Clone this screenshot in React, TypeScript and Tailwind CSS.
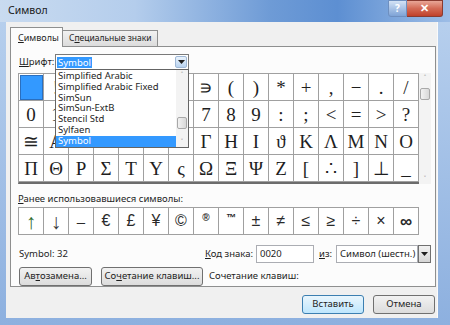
import React from 'react';

const gridRows: string[][] = [
  [' ', '!', '∀', '#', '∃', '%', '&', '∍', '(', ')', '*', '+', ',', '−', '.', '/'],
  ['0', '1', '2', '3', '4', '5', '6', '7', '8', '9', ':', ';', '<', '=', '>', '?'],
  ['≅', 'Α', 'Β', 'Χ', 'Δ', 'Ε', 'Φ', 'Γ', 'Η', 'Ι', 'ϑ', 'Κ', 'Λ', 'Μ', 'Ν', 'Ο'],
  ['Π', 'Θ', 'Ρ', 'Σ', 'Τ', 'Υ', 'ς', 'Ω', 'Ξ', 'Ψ', 'Ζ', '[', '∴', ']', '⊥', '_'],
];

const recent = ['↑', '↓', '–', '€', '£', '¥', '©', '®', '™', '±', '≠', '≤', '≥', '÷', '×', '∞'];

const fonts = ['Simplified Arabic', 'Simplified Arabic Fixed', 'SimSun', 'SimSun-ExtB', 'Stencil Std', 'Sylfaen', 'Symbol'];

function DownArrow() {
  return (
    <svg width="7" height="4" viewBox="0 0 7 4">
      <path d="M0 0h7L3.5 4z" fill="#1e1e1e" />
    </svg>
  );
}

function Scrollbar({ small }: { small?: boolean }) {
  return (
    <div className="w-[12px] flex flex-col justify-between items-center bg-[#f3f3f3] py-[1px]">
      <div className="w-[10px] flex flex-col items-center">
        <span className="text-[7px] leading-[8px] text-[#606060]">˄</span>
        {!small && <div className="w-[10px] h-[12px] mt-[6px] border border-[#a8a8a8] rounded-[2px] bg-gradient-to-r from-[#f2f2f2] to-[#d8d8d8]" />}
      </div>
      {small && <div className="w-[10px] h-[12px] border border-[#a8a8a8] rounded-[2px] bg-gradient-to-r from-[#f2f2f2] to-[#d8d8d8] mt-[28px]" />}
      <span className="text-[7px] leading-[8px] text-[#606060]">˅</span>
    </div>
  );
}

function Btn({ children, w, focused }: { children: React.ReactNode; w: string; focused?: boolean }) {
  return (
    <div
      className={`${w} h-[19px] flex items-center justify-center rounded-[3px] border text-[9.5px] text-[#1e1e1e] ${
        focused
          ? 'border-[#3c7fb1] bg-gradient-to-b from-[#eaf6fd] to-[#bee6fd]'
          : 'border-[#707070] bg-gradient-to-b from-[#f2f2f2] to-[#dcdcdc]'
      }`}
    >
      {children}
    </div>
  );
}

function recentClass(c: string, i: number) {
  if (i === 0) return 'text-[21px] text-[#2d6a2d] font-light';
  if (i === 1) return 'text-[21px] text-[#3a3a3a] font-light';
  if (c === '®' || c === '™') return 'text-[10px] font-bold text-[#2a2a2a] pb-[6px]';
  if (c === '∞') return 'text-[17px] font-bold text-[#2a2a2a]';
  if (c === '–') return 'text-[15px] text-[#2a2a2a]';
  return 'text-[16px] text-[#2a2a2a]';
}

export default function App() {
  return (
    <div className="w-[450px] h-[325px] flex flex-col overflow-hidden bg-gradient-to-b from-[#b9d1ee] to-[#8db0df] font-['Noto_Sans','Open_Sans',sans-serif] text-[#1e1e1e]">
      {/* title bar */}
      <div className="h-[22px] flex items-start justify-between bg-[linear-gradient(90deg,#c9dbf0_0%,#b4cdec_30%,#6e9bd6_60%,#5d8fd2_75%,#9dbde6_100%)]">
        <span className="pl-[8px] pt-[3px] text-[10.5px] text-[#1a1a1a]">Символ</span>
        <div className="flex pr-[7px]">
          <div className="w-[19px] h-[17px] flex items-center justify-center rounded-bl-[3px] border border-[#6e8fbf] bg-gradient-to-b from-[#d3e2f5] to-[#7ea3d6] text-[10px] font-bold text-white">?</div>
          <div className="w-[36px] h-[17px] flex items-center justify-center rounded-br-[3px] border border-l-0 border-[#8a3b30] bg-gradient-to-b from-[#e8a697] via-[#d36a55] to-[#c0402a] text-[11px] font-bold text-white">✕</div>
        </div>
      </div>

      {/* client */}
      <div className="flex-1 flex pl-[6px] pr-[12px] pb-[7px]">
        <div className="flex-1 bg-[#f0f0f0] flex flex-col pl-[4px] pr-[1px] pt-[5px] border-r border-[#fafafa]">
          {/* tabs */}
          <div className="flex items-end h-[19px] relative z-10">
            <div className="w-[53px] h-[20px] pl-[7px] flex items-center bg-[#fcfcfc] border border-b-0 border-[#8e8f8f] text-[9px] -mb-[1px]">
              <span><u>С</u>имволы</span>
            </div>
            <div className="w-[95px] h-[16px] pl-[6px] flex items-center bg-gradient-to-b from-[#f2f2f2] to-[#dcdcdc] border border-l-0 border-b-0 border-[#8e8f8f] text-[8.5px] whitespace-nowrap">
              <span>С<u>п</u>ециальные знаки</span>
            </div>
          </div>

          {/* panel */}
          <div className="w-[426px] h-[241px] bg-[#fcfcfc] border border-[#8e8f8f] flex flex-col pl-[7px] pt-[7px]">
            {/* font row */}
            <div className="flex items-center h-[16px] relative z-20">
              <span className="w-[37px] pl-[1px] text-[9.5px]"><u>Ш</u>рифт:</span>
              <div className="relative w-[134px] h-[16px] border border-[#7a7a7a] bg-white flex items-center pl-[1px]">
                <span className="bg-[#3399ff] text-white text-[9.5px] leading-[11px] px-[1px]">Symbol</span>
                <div className="absolute right-[1px] top-[1px] w-[12px] h-[12px] border border-[#9fb8d6] rounded-[2px] bg-gradient-to-b from-[#eaf3fc] to-[#b9d3ef] flex items-center justify-center">
                  <DownArrow />
                </div>
                {/* dropdown list */}
                <div className="absolute left-[-1px] top-[14px] w-[134px] h-[79px] border border-[#646464] bg-white flex">
                  <div className="flex-1 flex flex-col pt-[1px]">
                    {fonts.map((f) => (
                      <div
                        key={f}
                        className={`h-[10.8px] leading-[10.8px] pl-[2px] text-[9.5px] ${f === 'Symbol' ? 'bg-[#3399ff] text-white' : ''}`}
                      >
                        {f}
                      </div>
                    ))}
                  </div>
                  <Scrollbar small />
                </div>
              </div>
            </div>

            {/* symbol grid */}
            <div className="flex mt-[3px]">
              <div className="grid grid-cols-[repeat(16,25px)] border-l border-t border-[#a0a0a0] border-b-2 border-b-[#6c6c6c] bg-white font-['Liberation_Serif',serif] text-[19px]">
                {gridRows.flat().map((c, i) => (
                  <div key={i} className="h-[27px] border-r border-b border-[#a0a0a0] flex items-center justify-center leading-none">
                    {i === 0 ? <div className="w-[23px] h-[25px] bg-[#3399ff] border border-[#2a6fbf]" /> : c}
                  </div>
                ))}
              </div>
              <Scrollbar />
            </div>

            {/* recent */}
            <div className="mt-[9px] text-[9.5px] leading-[12px]"><u>Р</u>анее использовавшиеся символы:</div>
            <div className="mt-[2px] grid grid-cols-[repeat(16,25px)] w-[401px] border-l border-t border-[#a0a0a0] bg-white font-['Liberation_Sans',sans-serif]">
              {recent.map((c, i) => (
                <div
                  key={i}
                  className={`h-[27px] border-r border-b border-[#a0a0a0] flex items-center justify-center leading-none ${recentClass(c, i)}`}
                >
                  {c}
                </div>
              ))}
            </div>

            {/* code row */}
            <div className="flex items-center mt-[10px] h-[18px] text-[9.5px]">
              <span className="w-[187px] pl-[1px]">Symbol: 32</span>
              <span className="w-[51px]"><u>К</u>од знака:</span>
              <div className="w-[58px] h-[18px] border border-[#abadb3] bg-white flex items-center pl-[3px]">0020</div>
              <span className="w-[22px] pl-[5px]"><u>и</u>з:</span>
              <div className="w-[95px] h-[18px] flex">
                <div className="flex-1 border border-[#abadb3] bg-white flex items-center pl-[3px]">Символ (шестн.)</div>
                <div className="w-[13px] border border-[#707070] bg-gradient-to-b from-[#f2f2f2] to-[#d5d5d5] flex items-center justify-center">
                  <DownArrow />
                </div>
              </div>
            </div>

            {/* buttons row */}
            <div className="flex items-center mt-[4px] pl-[1px]">
              <Btn w="w-[73px]">Ав<u>т</u>озамена...</Btn>
              <div className="w-[9px]" />
              <Btn w="w-[102px]">Со<u>ч</u>етание клавиш...</Btn>
              <span className="ml-[6px] text-[9.5px]">Сочетание клавиш:</span>
            </div>
          </div>

          {/* bottom buttons */}
          <div className="flex justify-end gap-[9px] mt-[8px] pr-[1px]">
            <Btn w="w-[62px]" focused>Вставить</Btn>
            <Btn w="w-[62px]">Отмена</Btn>
          </div>
        </div>
      </div>
    </div>
  );
}
